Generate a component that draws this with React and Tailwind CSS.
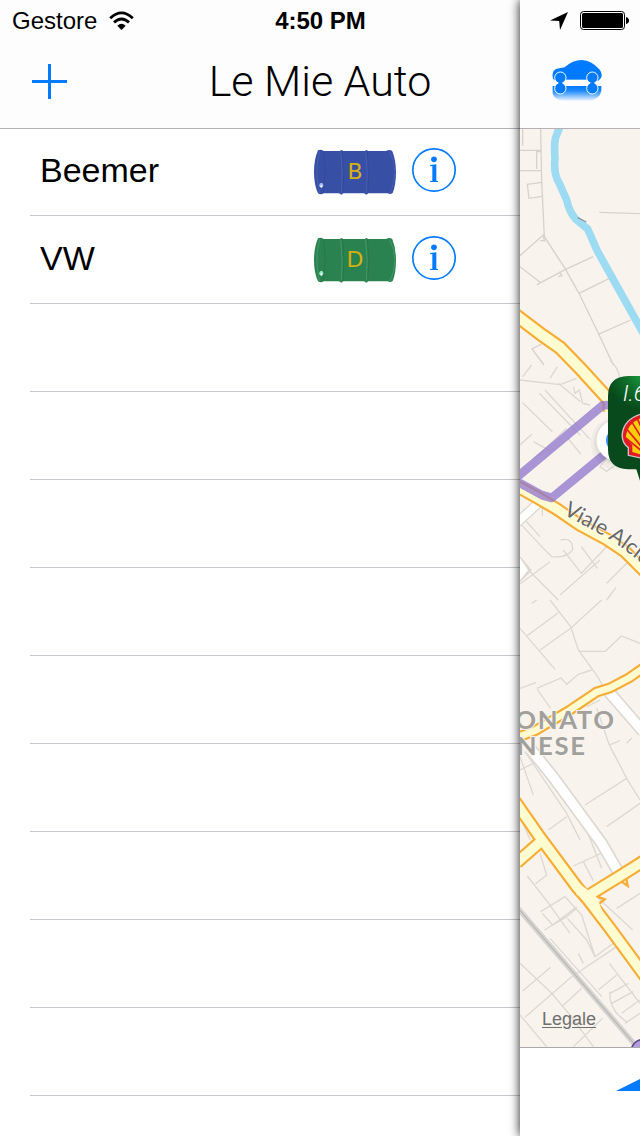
import React from "react";

const cars = [
  { name: "Beemer", fuel: "B", body: "#3750a6", edge: "#465fb0", dark: "#30479a", shine: "#a9b8ee" },
  { name: "VW", fuel: "D", body: "#2a8250", edge: "#449868", dark: "#237546", shine: "#9be8bd" },
];

function WifiIcon() {
  return (
    <svg className="h-5 w-[25px]" viewBox="0 0 25 20" aria-hidden="true">
      <g fill="none" stroke="#000" strokeWidth="2.8">
        <path d="M1.200 7.200Q12.500 -3.400 23.800 7.200" />
        <path d="M5 11.400Q12.500 4.600 20 11.400" />
      </g>
      <path d="M8.300 14.700Q12.500 11 16.700 14.700L12.500 19Z" />
    </svg>
  );
}

function LocationIcon() {
  return (
    <svg className="h-[18px] w-[18px]" viewBox="0 0 18 18" aria-hidden="true">
      <path d="M18 0L10 18L9.200 9L0 8.600Z" />
    </svg>
  );
}

function BatteryIcon() {
  return (
    <svg className="h-5 w-[49px]" viewBox="0 0 49 20" aria-hidden="true">
      <rect x="0.500" y="0.500" width="44" height="18" rx="3" fill="#fff" stroke="#000" />
      <rect x="2" y="2" width="41" height="15" rx="1.500" />
      <path d="M46 6Q49 7 49 9.500Q49 12 46 13Z" />
    </svg>
  );
}

function CarIcon() {
  return (
    <svg className="h-[42px] w-[50px]" viewBox="0 0 150 126" aria-hidden="true">
      <defs>
        <linearGradient id="reflection" x1="0" y1="0" x2="0" y2="1">
          <stop offset="0" stopColor="#007aff" />
          <stop offset="0.3" stopColor="#1b8aff" />
          <stop offset="1" stopColor="#007aff" stopOpacity="0" />
        </linearGradient>
      </defs>
      <path d="M2 78H148V92Q145 106 138 112L118 124H35Q4 118 2 100Z" fill="url(#reflection)" />
      <path d="M3 56Q-2 31 14 26L38 22Q62 0 90 0Q118 1 142 28Q153 42 147 54L139 62H10Z" fill="#007aff" />
      <path d="M36 59H112V77H36Z" fill="#fff" />
      <g fill="#007aff" stroke="#fff" strokeWidth="3">
        <circle cx="25" cy="53" r="17" />
        <circle cx="121" cy="53" r="17" />
        <circle cx="25" cy="85" r="17" />
        <circle cx="121" cy="85" r="17" />
      </g>
      <path d="M15 60L20 69L15 78H35L30 69L35 60ZM111 60L116 69L111 78H131L126 69L131 60Z" fill="#007aff" />
    </svg>
  );
}

function Barrel({ car }) {
  return (
    <span className="relative grid h-[46px] w-[84px] place-items-center">
      <svg className="absolute inset-0 h-full w-full" viewBox="0 0 252 138" aria-hidden="true">
        <path
          d="M15 4Q23 0 32 6H80L85 3L91 6H155L160 3L166 6H219Q231 0 238 7Q249 34 249 70Q249 108 239 132Q232 138 224 133H166L160 137L153 133H91L85 137L78 133H32Q24 139 15 133Q3 108 3 69Q3 31 15 4Z"
          fill={car.body}
        />
        <g fill="none" stroke={car.edge} strokeWidth="3">
          <path d="M20 7Q3 69 20 132" />
          <path d="M83 7Q91 69 85 132M158 7Q166 69 160 132" />
          <path d="M229 7Q246 36 245 70Q244 107 230 132" />
        </g>
        <path d="M33 7Q40 69 32 132M88 7Q96 69 90 132M163 7Q171 69 165 132" fill="none" stroke={car.dark} strokeWidth="2" />
        <ellipse cx="25" cy="109" rx="6" ry="8" fill={car.shine} />
        <circle cx="25" cy="112" r="3" fill="#fff" />
      </svg>
      <span className="relative font-['DejaVu_Sans'] text-[22px] leading-6 text-[#d8b010]">{car.fuel}</span>
    </span>
  );
}

function InfoIcon() {
  return (
    <svg className="size-11" viewBox="0 0 132 132" fill="#007aff" aria-hidden="true">
      <circle cx="66" cy="66" r="63.500" fill="none" stroke="#007aff" strokeWidth="5" />
      <circle cx="66" cy="34" r="8.500" />
      <path d="M54 51L73 49V98L78 99V102H54V99L61 98V55L54 54Z" />
    </svg>
  );
}

function Road({ d, width }) {
  return (
    <g fill="none">
      <path d={d} stroke="#f7ad35" strokeWidth={width + 13} />
      <path d={d} stroke="#fffcd2" strokeWidth={width} />
    </g>
  );
}

function PriceMap() {
  return (
    <svg
      className="h-full w-full"
      viewBox="30 12 360 2754"
      preserveAspectRatio="xMinYMin slice"
      role="img"
      aria-label="Mappa"
    >
      <rect x="30" y="12" width="2000" height="3200" fill="#f8f4ed" />

      <g fill="none" stroke="#d6d2cc" strokeWidth="4">
        <path d="M38 12V62M92 12L95 168L103 335L165 430L207 505L265 625L310 720M30 76H95M30 137H95M95 80H80V132" />
        <path d="M95 172L52 178L57 220L98 214M268 262L390 266M30 392L102 328M90 346L104 348L98 330" />
        <path d="M30 425L92 473L165 434L250 395M207 505L298 460M265 628L362 585M148 440L156 452L144 455M80 480L92 473M102 720L66 672L95 657" />
      </g>
      <path d="M150 4L136 40Q132 65 135 100Q130 148 148 175L170 225Q178 262 198 283L233 312L262 378L400 625" fill="none" stroke="#9ddbf3" strokeWidth="23" strokeLinejoin="round" />
      <path d="M203 278L229 291" stroke="#8d9696" strokeWidth="4" />

      <g transform="translate(0 705)" fill="none" stroke="#dcd8d2" strokeWidth="4">
        <path d="M30 60L150 74L200 55M65 15L38 50M120 55L142 20M88 100L210 225M38 128L127 215M105 90L240 238M145 70L212 125M190 80L195 100L208 90L218 130L240 135" />
        <path d="M30 255L66 222M75 295L170 205M70 245L125 275M170 230L212 282M270 320L290 295L320 312L290 334Z" />
        <path d="M97 425V468M30 490L100 565L125 590Q172 595 188 568Q188 530 152 540M45 480L90 530M160 570L214 640L300 550M214 560L262 625M290 670L380 580M120 605L30 672M150 705L270 600M290 720L318 682M40 615L145 720M300 0Q330 30 328 55" />
      </g>
      <g transform="translate(0 1425)" fill="none" stroke="#dcd8d2" strokeWidth="4">
        <path d="M120 0L182 80L205 150L260 225L280 260M275 0L182 85L90 150M145 38L50 108M30 85L135 208M205 154H286L334 108L390 130M65 10L80 0" />
        <path d="M80 265L153 234L170 253L205 223L245 210M82 268L122 325M30 265L78 248M260 325L298 435L350 535L390 600M298 435L330 422M225 615L350 535M30 470L70 585M45 455L170 640L210 720M30 510L82 484M115 690L170 650M290 680L390 610M365 415L350 430M30 645L60 720M230 320L270 300" />
      </g>
      <g transform="translate(0 2115)" fill="none" stroke="#dcd8d2" strokeWidth="4">
        <path d="M90 70L110 135L76 162M52 138L112 215L180 310M92 245L165 200L215 255L255 380L310 340M103 300L170 260L200 235M120 325L275 500M172 265L230 330L255 380M97 250L128 285L200 230M220 95L250 152M190 108L295 60M260 200L368 300M320 235L390 190M230 0L275 115" />
        <path d="M30 400L125 490L180 555L250 650M38 483L122 412M45 562L185 440L320 350M155 530L215 475M30 555L110 650M190 650L278 565M298 400L390 520M265 480L320 435M300 490L355 460M305 520L370 485M335 550L390 510M345 580L390 550M205 370L220 400M300 485Q295 540 350 575" />
      </g>

      <Road d="M10 565L96 630L150 668L215 735L300 828L300 860" width={31} />

      <g transform="translate(0 705)" fill="none">
        <path d="M20 489L90 425M20 600L45 630L20 655" stroke="#ddd8d0" strokeWidth="31" />
        <path d="M20 489L90 425M20 600L40 630L20 655" stroke="#fff" strokeWidth="23" />
      </g>
      <Road d="M10 1078L80 1117L140 1152L210 1200L290 1243L345 1280L410 1345" width={28} />

      <g transform="translate(0 1425)" fill="none">
        <path d="M64 450L130 532L275 730L340 842M296 275L400 395" stroke="#ddd8d0" strokeWidth="38" />
        <path d="M64 450L130 532L275 730L340 842M296 275L400 395" stroke="#fff" strokeWidth="28" />
        <Road d="M20 413L75 392L180 330L260 276L300 264L360 232L405 200" width={20} />
      </g>
      <g transform="translate(0 2115)" fill="none">
        <path d="M20 230L380 650" stroke="#d6d4d1" strokeWidth="16" />
        <path d="M20 230L380 650" stroke="#bbb9b6" strokeWidth="4" />
        <path d="M262 200L284 208L266 222M322 146L353 168L348 140" stroke="#f7ad35" strokeWidth="7" />
        <Road d="M5 -100L85 15L200 170L235 210L300 295L410 445M20 98L95 32M228 201L335 135L400 94" width={28} />
        <path d="M190 150L238 182L262 204L290 280L235 212L200 194Z" fill="#fffcd2" />
      </g>

      <g transform="translate(0 705)">
        <path d="M298 135L278 136L20 352M20 364L95 405L125 414L290 278" fill="none" stroke="#8f74cc" strokeOpacity="0.75" strokeWidth="26" strokeLinejoin="round" />
        <circle cx="322" cy="250" r="80" fill="#000" fillOpacity="0.03" />
        <circle cx="322" cy="246" r="70" fill="#000" fillOpacity="0.05" />
        <circle cx="322" cy="241" r="62" fill="#fff" />
        <circle cx="322" cy="241" r="34" fill="#3d8cf5" />
        <path id="street" d="M158 462L290 533Q350 568 440 650" fill="none" />
        <text className="font-['Lato']" fontSize="64" fill="#666" stroke="#fff" strokeOpacity="0.7" strokeWidth="6" paintOrder="stroke">
          <textPath href="#street">Viale Alcide</textPath>
        </text>
        <defs>
          <radialGradient id="pin" gradientUnits="userSpaceOnUse" cx="400" cy="40" r="110">
            <stop offset="0" stopColor="#1ba341" />
            <stop offset="0.5" stopColor="#0f6e2b" />
            <stop offset="1" stopColor="#084a1b" />
          </radialGradient>
        </defs>
        <path d="M354 48H700V328H394V375L379 328H354Q294 326 294 268V108Q294 50 354 48Z" fill="url(#pin)" />
        <text x="338" y="124" className="font-['Roboto'] font-light italic" fontSize="68" fill="#fff">I.6</text>
        <path d="M355 286V263Q334 248 337 220Q343 175 400 160V296Z" fill="#e21b23" stroke="#c9c9c9" strokeWidth="4" />
        <path d="M367 276V255L347 232Q351 188 400 172V286Z" fill="#fbce07" />
        <path d="M352 209L396 262M366 187L400 242M382 176L400 215M345 232L396 274" stroke="#e21b23" strokeWidth="5" />
      </g>

      <g transform="translate(0 1425)" className="font-['Lato'] font-bold" fill="#a1a09c" stroke="#f8f4ed" strokeWidth="6" paintOrder="stroke">
        <text x="16" y="388" fontSize="77" letterSpacing="5">ONATO</text>
        <text x="20" y="466" fontSize="77" letterSpacing="5">NESE</text>
      </g>
      <circle cx="398" cy="2778" r="34" fill="#b39ddb" stroke="#5b4a8a" strokeWidth="5" />
    </svg>
  );
}

export default function App() {
  return (
    <div className="relative flex min-h-screen overflow-hidden bg-white font-['Liberation_Sans',sans-serif] text-black">
      <div className="absolute inset-x-0 top-0 z-20 grid h-[42px] grid-cols-[1fr_auto_1fr] items-center pr-[11px] pl-3 text-2xl leading-10">
        <div className="flex items-center gap-3">
          <span>Gestore</span>
          <WifiIcon />
        </div>
        <time className="font-bold">4:50 PM</time>
        <div className="flex items-center justify-end gap-3">
          <LocationIcon />
          <BatteryIcon />
        </div>
      </div>

      <main className="flex w-[81.25%] shrink-0 flex-col">
        <header className="flex h-[129px] items-center border-b border-[#b2b2b2] bg-[#fdfdfd] pt-[34px]">
          <button type="button" aria-label="Aggiungi auto" className="flex w-[120px] pl-8">
            <svg className="size-[35px]" viewBox="0 0 35 35" aria-hidden="true">
              <path d="M16 0H19V16H35V19H19V35H16V19H0V16H16Z" fill="#007aff" />
            </svg>
          </button>
          <h1 className="flex-1 text-center font-['Roboto'] text-[43px] leading-[48px] font-light">Le Mie Auto</h1>
        </header>
        <ul className="-mt-px flex-1 overflow-hidden">
          {cars.map((car) => (
            <li key={car.name} className="pl-[30px]">
              <div className="flex h-[88px] items-center border-b border-[#c8c7cc] pr-16 pl-[10px]">
                <span className="flex-1 pb-1 text-[34px] leading-10">{car.name}</span>
                <Barrel car={car} />
                <button type="button" aria-label={"Dettagli " + car.name} className="ml-[15px] pb-1">
                  <InfoIcon />
                </button>
              </div>
            </li>
          ))}
          {Array.from({ length: 9 }, (_, i) => (
            <li key={i} aria-hidden="true" className="ml-[30px] h-[88px] border-b border-[#c8c7cc]" />
          ))}
        </ul>
      </main>

      <section className="z-10 flex min-w-0 flex-1 flex-col bg-white shadow-[0_0_10px_rgba(0,0,0,0.9)]">
        <header className="flex h-[129px] items-center border-b border-[#b2b2b2] bg-[#fdfdfd] pt-[34px] pl-8">
          <button type="button" aria-label="Le mie auto">
            <CarIcon />
          </button>
        </header>
        <div className="relative min-h-0 flex-1 overflow-hidden">
          <div className="absolute inset-0">
            <PriceMap />
          </div>
          <a href="#legale" className="absolute bottom-[18px] left-[22px] text-lg leading-5 text-[#6f6f6f] underline underline-offset-2">
            Legale
          </a>
        </div>
        <footer className="flex h-[89px] items-start justify-end overflow-hidden border-t border-[#a9a9a9] bg-white">
          <button type="button" aria-label="Posizione" className="pt-[31px]">
            <svg className="block h-3 w-6" viewBox="0 0 24 12" aria-hidden="true">
              <path d="M0 12L24 0V12Z" fill="#007aff" />
            </svg>
          </button>
        </footer>
      </section>
    </div>
  );
}
